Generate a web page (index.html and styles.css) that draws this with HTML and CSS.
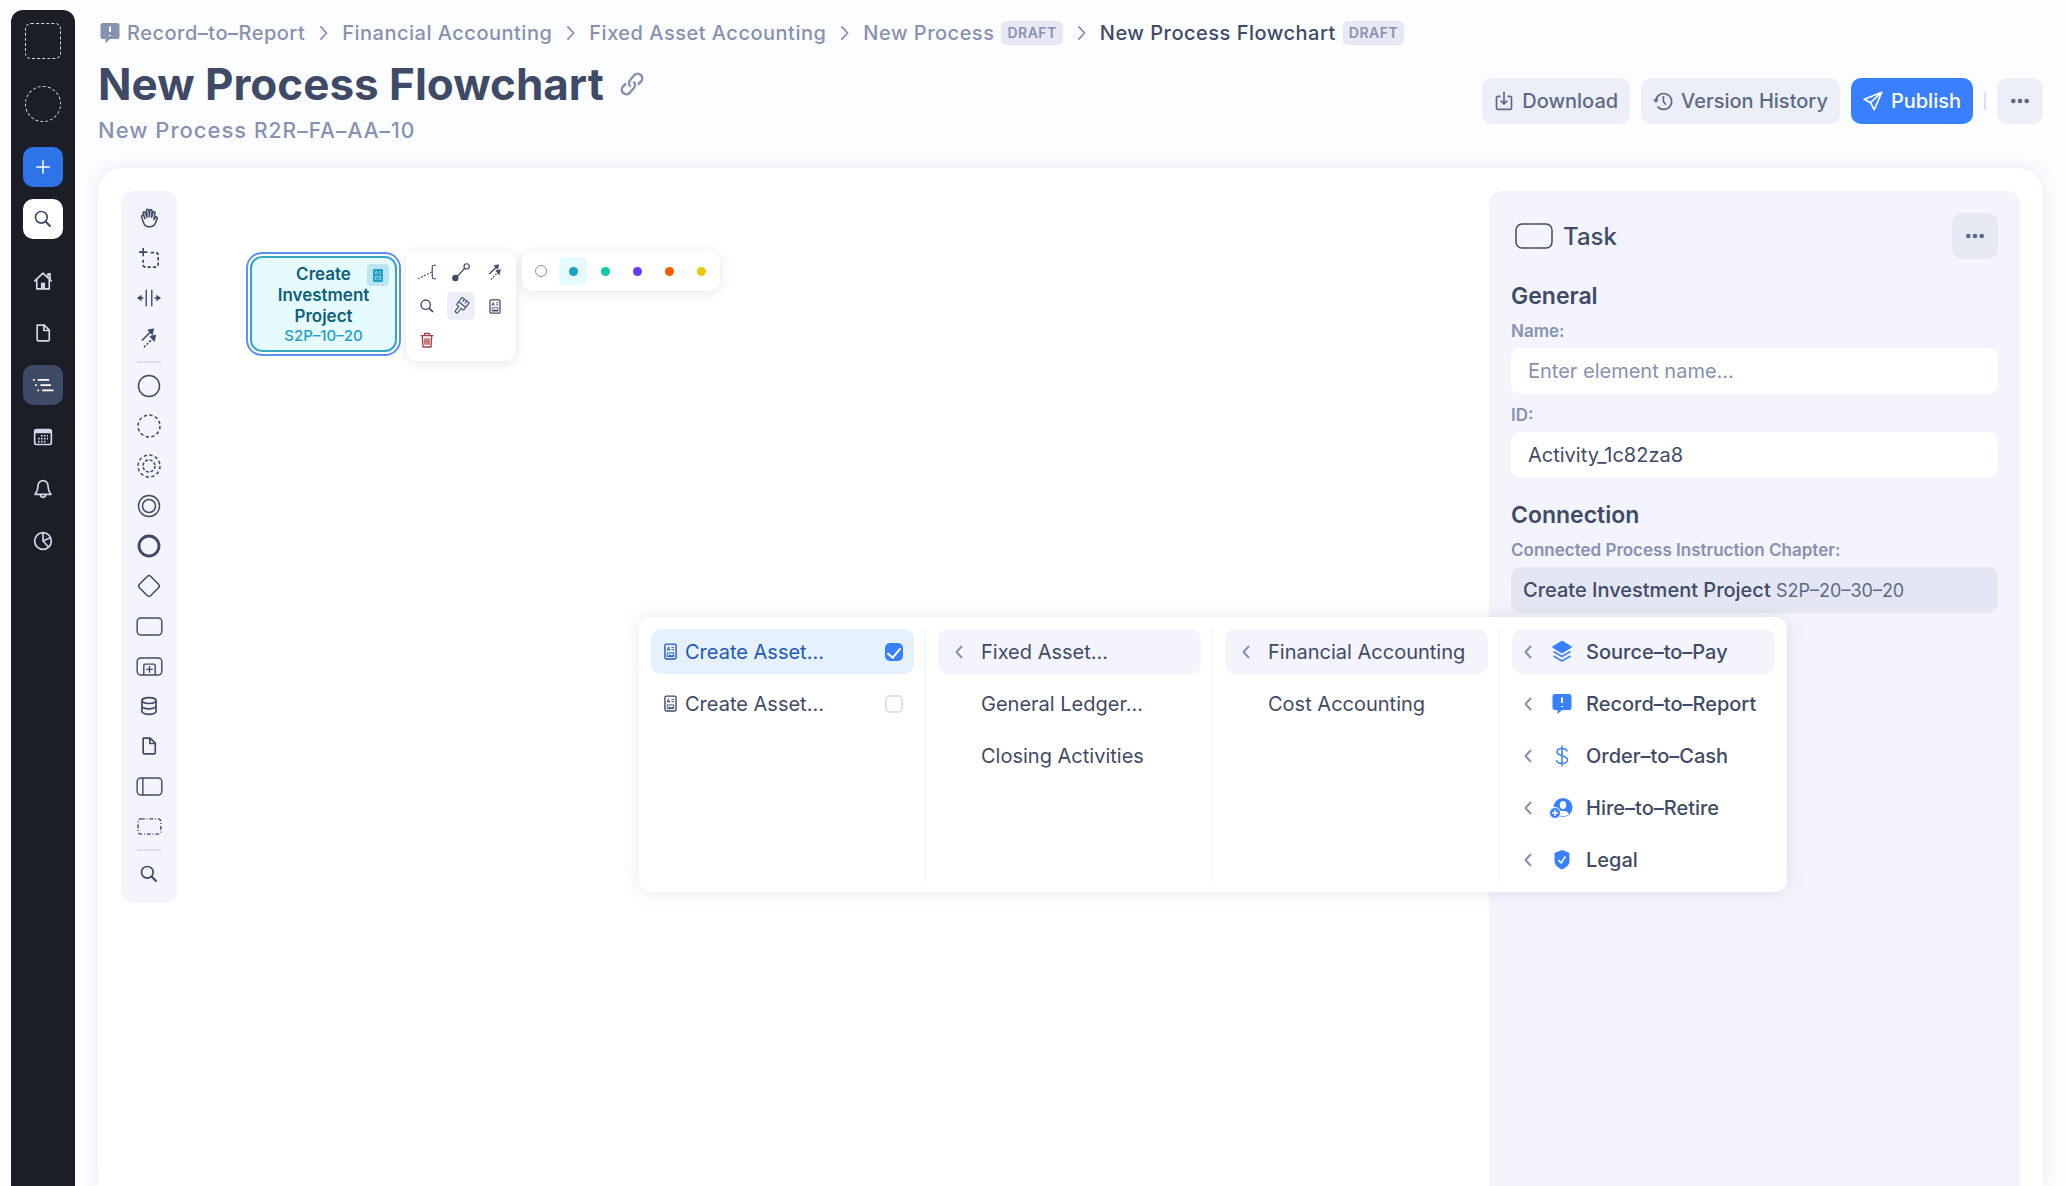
FILE: index.html
```
<!DOCTYPE html>
<html lang="en">
<head>
    <meta charset="UTF-8">
    <meta name="viewport" content="width=device-width, initial-scale=1.0">
    <title>New Process Flowchart</title>
    <link rel="stylesheet" href="styles.css">
</head>
<body>
    <!-- Shared icons -->
    <svg class="sprite" aria-hidden="true">
        <symbol id="i-search" viewBox="0 0 24 24"><circle cx="10" cy="10" r="7"/><path d="M15 15l6 6" stroke-width="2.6"/></symbol>
        <symbol id="i-file" viewBox="0 0 24 24"><path d="M5 2.5h8.5l6 6V20a1.5 1.5 0 0 1-1.500 1.500H6.500A1.500 1.500 0 0 1 5 20zM13 3v6h6"/></symbol>
        <symbol id="i-dots" viewBox="0 0 24 24"><g fill="currentColor" stroke="none"><circle cx="4" cy="12" r="2.800"/><circle cx="12" cy="12" r="2.800"/><circle cx="20" cy="12" r="2.800"/></g></symbol>
        <symbol id="i-right" viewBox="0 0 10 18"><path d="M1.500 1.500l7 7.500-7 7.500"/></symbol>
        <symbol id="i-left" viewBox="0 0 8 14"><path d="M7 1L1.500 7 7 13"/></symbol>
        <symbol id="i-chat" viewBox="0 0 20 22"><path d="M3 1h14a2.500 2.500 0 0 1 2.500 2.500v11A2.500 2.500 0 0 1 17 17H10l-4.500 4V17H3A2.500 2.500 0 0 1 .5 14.500v-11A2.500 2.500 0 0 1 3 1z" fill="currentColor" stroke="none"/><path d="M10 4.500v5.500M10 13v1" stroke="#fff" stroke-width="2"/></symbol>
        <symbol id="i-doc" viewBox="0 0 14 18"><rect x="1" y="1" width="12" height="16" rx="1.500"/><path d="M3.500 8l1.300-4 1.300 4M4 6.800h1.800M8 4.500h3M8 7h3M3.500 10.500h7v4h-7z" stroke-width="1"/><path d="M4 14.500l2.500-2.500 1.500 1.500 1.500-1 1 2z" fill="currentColor" stroke="none"/></symbol>
        <symbol id="i-arrows" viewBox="0 0 24 24"><path d="M3.500 15L14 4.500"/><path d="M6 23L17 12" stroke-dasharray="2.500 2"/><path d="M17.500 1l-1.500 7-5.500-5.500zM20 8.500l-1.500 7.500-5.500-6z" fill="currentColor" stroke-width="1"/></symbol>
        <symbol id="i-task" viewBox="0 0 28 20"><rect x="1" y="1" width="26" height="18" rx="4"/></symbol>
    </svg>

    <nav class="sidebar" aria-label="Main">
        <div class="logo"></div>
        <div class="avatar"></div>
        <button class="side-btn add" aria-label="Create"><svg class="icon" viewBox="0 0 24 24"><path d="M12 3v18M3 12h18"/></svg></button>
        <button class="side-btn find" aria-label="Search"><svg class="icon"><use href="#i-search"/></svg></button>
        <a class="side-btn home" href="#" aria-label="Home"><svg class="icon" viewBox="0 0 24 24"><path d="M1.500 12.500L12 2.500l10.500 10M18 8V3.500h2.500V10M4.500 10.500V21.500h15V10.500"/><path d="M9.500 14h5v7.500h-5z" fill="currentColor" stroke="none"/></svg></a>
        <a class="side-btn" href="#" aria-label="Documents"><svg class="icon"><use href="#i-file"/></svg></a>
        <a class="side-btn active" href="#" aria-label="Processes"><svg class="icon wide" viewBox="0 0 24 16"><path d="M6 2h13M9 8h12M11 14h13M.5 2h2M3 8h2M5.500 14h2"/></svg></a>
        <a class="side-btn" href="#" aria-label="Calendar"><svg class="icon" viewBox="0 0 24 24"><rect x="2" y="3" width="20" height="18" rx="2"/><path d="M2 5.500h20" stroke-width="4"/><path d="M6 17.500h9M6 14h12M9.500 10.500H18" stroke-dasharray="2 1.500"/></svg></a>
        <a class="side-btn" href="#" aria-label="Notifications"><svg class="icon" viewBox="0 0 24 24"><path d="M12 2a6 6 0 0 0-6 6c0 6-2 8-3.500 10.500h19C20 16 18 14 18 8a6 6 0 0 0-6-6zM9 19a3 3 0 0 0 6 0"/></svg></a>
        <a class="side-btn" href="#" aria-label="Reports"><svg class="icon" viewBox="0 0 24 24"><circle cx="12" cy="12" r="10"/><path d="M12 2v10l7 7.500M12 12l9-4"/></svg></a>
    </nav>

    <main>
        <nav class="breadcrumbs" aria-label="Breadcrumb">
            <a href="#"><svg class="icon chat"><use href="#i-chat"/></svg>Record–to–Report</a>
            <svg class="icon sep"><use href="#i-right"/></svg>
            <a href="#">Financial Accounting</a>
            <svg class="icon sep"><use href="#i-right"/></svg>
            <a href="#">Fixed Asset Accounting</a>
            <svg class="icon sep"><use href="#i-right"/></svg>
            <a href="#">New Process <span class="tag">DRAFT</span></a>
            <svg class="icon sep"><use href="#i-right"/></svg>
            <a href="#" class="current" aria-current="page">New Process Flowchart <span class="tag">DRAFT</span></a>
        </nav>

        <header>
            <div class="heading">
                <h1>New Process Flowchart <a href="#" class="permalink" aria-label="Copy link"><svg class="icon" viewBox="0 0 24 24"><path d="M10.500 14.500a5 5 0 0 1 0-7l4-4.500a4.600 4.600 0 0 1 6.500 6.500L18 12.500M13.500 9.500a5 5 0 0 1 0 7l-4 4.500A4.600 4.600 0 0 1 3 14.500L6 11.500"/></svg></a></h1>
                <p>New Process <small>R2R–FA–AA–10</small></p>
            </div>
            <div class="actions">
                <button class="btn"><svg class="icon" viewBox="0 0 24 24"><path d="M8 6.500H5A2 2 0 0 0 3 8.500V20a2 2 0 0 0 2 2h14a2 2 0 0 0 2-2V8.500a2 2 0 0 0-2-2h-3M12 1v14.500M8 11.500l4 4 4-4"/></svg>Download</button>
                <button class="btn"><svg class="icon" viewBox="0 0 24 24"><path d="M3.500 11a9.500 9.500 0 1 1 2 7.500M12.500 6v6.500l3 4"/><path d="M0 10h7l-3.500 4.500z" fill="currentColor" stroke="none"/></svg>Version History</button>
                <button class="btn primary"><svg class="icon" viewBox="0 0 24 24"><path d="M22.500 1.500L1.500 10l7.500 4 4.500 8.500zM22.500 1.500L9 14"/></svg>Publish</button>
                <span class="divider"></span>
                <button class="btn square" aria-label="More"><svg class="icon"><use href="#i-dots"/></svg></button>
            </div>
        </header>

        <section class="workspace">
            <div class="toolbar" role="toolbar" aria-label="Elements">
                <button aria-label="Hand tool"><svg class="icon" viewBox="0 0 24 26"><path d="M7 14.500L4.500 7c-.6-2.200 2-3 2.700-.8L9.500 12 8.800 3.500c0-2.300 2.700-2.400 3 0l.7 8 .7-8c.3-2.200 2.900-2 2.800.3L15.500 12l1.700-6c.6-2 3-1.400 2.600.8L18.500 15l1.500-2.500c1-1.800 3.400-.8 2.600 1.300-1.800 4.700-2.600 10.700-9.600 10.700-7.500 0-8.500-5-10.500-13C2 9.300 4.400 8.600 5 10.500"/></svg></button>
                <button aria-label="Lasso tool"><svg class="icon" viewBox="0 0 24 24"><path d="M5 0v10M0 5h10"/><path d="M14 5.500h6a3 3 0 0 1 3 3V20a3 3 0 0 1-3 3H8a3 3 0 0 1-3-3v-6" stroke-dasharray="4 2.500"/></svg></button>
                <button aria-label="Space tool"><svg class="icon big" viewBox="0 0 26 24"><path d="M10 3v18M16 3v18M1 12h6M25 12h-6"/><path d="M5 8.500v7L0 12zM21 8.500v7l5-3.500z" fill="currentColor" stroke="none"/></svg></button>
                <button aria-label="Connect tool"><svg class="icon"><use href="#i-arrows"/></svg></button>
                <hr>
                <button aria-label="Start event"><svg class="icon big" viewBox="0 0 24 24"><circle cx="12" cy="12" r="10.500"/></svg></button>
                <button aria-label="Non-interrupting event"><svg class="icon big" viewBox="0 0 24 24"><circle cx="12" cy="12" r="11" stroke-dasharray="3.300 2.460"/></svg></button>
                <button aria-label="Boundary event"><svg class="icon big" viewBox="0 0 24 24"><circle cx="12" cy="12" r="11" stroke-dasharray="3.300 2.460"/><circle cx="12" cy="12" r="6" stroke-dasharray="3 1.700"/></svg></button>
                <button aria-label="Intermediate event"><svg class="icon big" viewBox="0 0 24 24"><circle cx="12" cy="12" r="10.500"/><circle cx="12" cy="12" r="6.500"/></svg></button>
                <button aria-label="End event"><svg class="icon big" viewBox="0 0 24 24"><circle cx="12" cy="12" r="10" stroke-width="2.800"/></svg></button>
                <button aria-label="Gateway"><svg class="icon big" viewBox="0 0 24 24"><rect x="4" y="4" width="16" height="16" rx="2.500" transform="rotate(45 12 12)"/></svg></button>
                <button aria-label="Task"><svg class="icon task"><use href="#i-task"/></svg></button>
                <button aria-label="Sub-process"><svg class="icon task" viewBox="0 0 28 20"><rect x="1" y="1" width="26" height="18" rx="4"/><path d="M8 19V9a1.500 1.500 0 0 1 1.500-1.500h9A1.500 1.500 0 0 1 20 9v10M14 9.500v7M10.500 13h7"/></svg></button>
                <button aria-label="Data store"><svg class="icon" viewBox="0 0 24 24"><ellipse cx="12" cy="5.500" rx="8.500" ry="3.500"/><path d="M3.500 5.500v13c0 2 4 3.500 8.500 3.500s8.500-1.500 8.500-3.500v-13M3.500 12c0 2 4 3.500 8.500 3.500s8.500-1.500 8.500-3.500"/></svg></button>
                <button aria-label="Data object"><svg class="icon"><use href="#i-file"/></svg></button>
                <button aria-label="Pool"><svg class="icon task" viewBox="0 0 28 20"><rect x="1" y="1" width="26" height="18" rx="4"/><path d="M7 1v18"/></svg></button>
                <button aria-label="Group"><svg class="icon task" viewBox="0 0 28 20"><rect x="2" y="2" width="24" height="16" rx="3" stroke-dasharray="4 2 1 2"/></svg></button>
                <hr>
                <button aria-label="Search"><svg class="icon"><use href="#i-search"/></svg></button>
            </div>

            <div class="canvas">
                <div class="node">
                    <div class="node-body">
                        <strong>Create Investment Project</strong>
                        <span>S2P–10–20</span>
                    </div>
                    <span class="node-badge"><svg class="icon" viewBox="0 0 14 18"><rect width="14" height="18" rx="2" fill="currentColor" stroke="none"/><path d="M3 7l1.500-4L6 7M8 4h3M8 6.500h3M3 10.500h8v5l-2-2-1.500 1.500-2-2L3 15z"/></svg></span>
                </div>

                <div class="popover context-menu">
                    <button aria-label="Annotation"><svg class="icon" viewBox="0 0 24 24"><path d="M24 3h-3a2 2 0 0 0-2 2v14a2 2 0 0 0 2 2h3"/><path d="M0 21l18-9" stroke-dasharray="2.500 2"/></svg></button>
                    <button aria-label="Connection"><svg class="icon" viewBox="0 0 24 24"><circle cx="19.500" cy="4.500" r="3.500"/><path d="M17 7L6 19"/><circle cx="4.500" cy="20" r="3.500" fill="currentColor"/></svg></button>
                    <button aria-label="Connect"><svg class="icon small"><use href="#i-arrows"/></svg></button>
                    <button aria-label="Change type"><svg class="icon small"><use href="#i-search"/></svg></button>
                    <button class="active" aria-label="Color"><svg class="icon" viewBox="0 0 24 24"><path d="M6 2h12v10.500a2 2 0 0 1-2 2h-2V21a2 2 0 0 1-4 0v-6.500H8a2 2 0 0 1-2-2zM6 9.500h12M10 2v4M14 2v4" transform="rotate(38 12 12)"/></svg></button>
                    <button aria-label="Instruction"><svg class="icon doc"><use href="#i-doc"/></svg></button>
                    <button class="danger" aria-label="Delete"><svg class="icon" viewBox="0 0 24 24"><path d="M2.500 5.500h19M8.500 5.500V2h7v3.500M5 5.500l1 17h12l1-17M9 9.500v9.500M12 9.500v9.500M15 9.500v9.500"/></svg></button>
                </div>

                <div class="popover palette">
                    <button aria-label="Default"><span class="dot none"></span></button>
                    <button class="active" aria-label="Blue"><span class="dot blue"></span></button>
                    <button aria-label="Green"><span class="dot green"></span></button>
                    <button aria-label="Purple"><span class="dot purple"></span></button>
                    <button aria-label="Orange"><span class="dot orange"></span></button>
                    <button aria-label="Yellow"><span class="dot yellow"></span></button>
                </div>
            </div>

            <aside class="panel">
                <div class="panel-head">
                    <svg class="icon" viewBox="0 0 38 26"><rect x="1" y="1" width="36" height="24" rx="6"/></svg>
                    <span>Task</span>
                    <button class="btn square" aria-label="Task options"><svg class="icon"><use href="#i-dots"/></svg></button>
                </div>

                <h2>General</h2>
                <div class="field">
                    <label for="name">Name:</label>
                    <input type="text" id="name" placeholder="Enter element name...">
                </div>
                <div class="field">
                    <label for="elementId">ID:</label>
                    <input type="text" id="elementId" value="Activity_1c82za8">
                </div>

                <h2>Connection</h2>
                <div class="field">
                    <label for="chapter">Connected Process Instruction Chapter:</label>
                    <button id="chapter" class="chapter" aria-expanded="true">Create Investment Project <small>S2P–20–30–20</small></button>

                    <div class="picker">
                        <div class="col">
                            <label class="option selected"><svg class="icon doc"><use href="#i-doc"/></svg>Create Asset...<input type="checkbox" checked></label>
                            <label class="option"><svg class="icon doc"><use href="#i-doc"/></svg>Create Asset...<input type="checkbox"></label>
                        </div>
                        <div class="col">
                            <button class="option open"><svg class="icon chevron"><use href="#i-left"/></svg>Fixed Asset...</button>
                            <button class="option"><span class="chevron"></span>General Ledger...</button>
                            <button class="option"><span class="chevron"></span>Closing Activities</button>
                        </div>
                        <div class="col">
                            <button class="option open"><svg class="icon chevron"><use href="#i-left"/></svg>Financial Accounting</button>
                            <button class="option"><span class="chevron"></span>Cost Accounting</button>
                        </div>
                        <div class="col areas">
                            <button class="option open"><svg class="icon chevron"><use href="#i-left"/></svg><svg class="icon area" viewBox="0 0 20 22"><path d="M10 .5l9 5.500-9 5.500L1 6z" fill="currentColor"/><path d="M1.500 10.500L10 15.500l8.500-5M1.500 15L10 20l8.500-5"/></svg>Source–to–Pay</button>
                            <button class="option"><svg class="icon chevron"><use href="#i-left"/></svg><svg class="icon area"><use href="#i-chat"/></svg>Record–to–Report</button>
                            <button class="option"><svg class="icon chevron"><use href="#i-left"/></svg><svg class="icon area" viewBox="0 0 20 22"><path d="M15 6.500C15 4.500 13 3.500 10 3.500S5 5 5 7c0 4.500 10.500 3 10.500 8 0 2-2.500 3.500-5.500 3.500S4.500 17 4.500 15M10 .5v21"/></svg>Order–to–Cash</button>
                            <button class="option"><svg class="icon chevron"><use href="#i-left"/></svg><svg class="icon area" viewBox="0 0 20 22"><circle cx="11" cy="10.500" r="9.500" fill="currentColor" stroke="none"/><ellipse cx="11" cy="8" rx="3.200" ry="4" fill="#fff" stroke="none"/><path d="M5 17c1.500-4.500 10.500-4.500 12 0-3.500 3-8.500 3-12 0z" fill="#fff" stroke="none"/><circle cx="3" cy="16" r="5.500" fill="currentColor" stroke="#fff" stroke-width="1"/><path d="M3 13v6M0 16h6" stroke="#fff"/></svg>Hire–to–Retire</button>
                            <button class="option"><svg class="icon chevron"><use href="#i-left"/></svg><svg class="icon area" viewBox="0 0 20 22"><path d="M10 1l7.500 3v8c0 4-3.500 6.500-7.500 8.500C6 18.500 2.500 16 2.500 12V4z" fill="currentColor" stroke="none"/><path d="M6.500 11l2.500 3 4.500-6.500" stroke="#fff"/></svg>Legal</button>
                        </div>
                    </div>
                </div>
            </aside>
        </section>
    </main>
</body>
</html>
```

FILE: styles.css
```
* {
    box-sizing: border-box;
}

body {
    font-family: Inter, "Liberation Sans", sans-serif;
    font-size: 20px;
    color: #3f4b66;
    background-color: #fcfdff;
    margin: 0;
    height: 100vh;
    display: flex;
    overflow: hidden;
}

button, input {
    font: inherit;
    color: inherit;
    border: none;
    background: none;
    padding: 0;
    margin: 0;
}

button {
    cursor: pointer;
}

a {
    color: inherit;
    text-decoration: none;
}

h1, h2, p {
    margin: 0;
}

.sprite {
    display: none;
}

.icon {
    width: 20px;
    height: 20px;
    flex: none;
    fill: none;
    stroke: currentColor;
    stroke-width: 2;
    stroke-linejoin: round;
    overflow: visible;
}

/* Sidebar */
.sidebar {
    width: 64px;
    flex: none;
    margin: 10px 0 0 11px;
    padding-top: 13px;
    background-color: #1b1e27;
    border-radius: 12px 12px 0 0;
    display: flex;
    flex-direction: column;
    align-items: center;
    gap: 12px;
    color: #d3d7ea;
}

.logo, .avatar {
    width: 36px;
    height: 36px;
    border: 1px dashed #d3d7ea;
    border-radius: 6px;
    flex: none;
}

.avatar {
    border-radius: 50%;
    margin: 15px 0 13px;
}

.side-btn {
    width: 40px;
    height: 40px;
    flex: none;
    border-radius: 10px;
    display: flex;
    align-items: center;
    justify-content: center;
}

.side-btn .wide {
    width: 22px;
    height: 14px;
}

.side-btn.add {
    background-color: #2f73e8;
    color: white;
}

.side-btn.add .icon {
    width: 18px;
}

.side-btn.find {
    background-color: white;
    color: #3f4b66;
}

.side-btn.home {
    margin-top: 10px;
}

.side-btn.active {
    background-color: #3f4b66;
    color: white;
}

/* Page header */
main {
    flex: 1;
    min-width: 0;
    padding: 20px 23px 0;
    display: flex;
    flex-direction: column;
}

.breadcrumbs {
    display: flex;
    align-items: center;
    gap: 14px;
    height: 26px;
    font-weight: 500;
    letter-spacing: 0.025em;
    color: #8791b0;
}

.breadcrumbs a {
    display: flex;
    align-items: center;
    gap: 7px;
}

.breadcrumbs .chat {
    height: 22px;
    margin-left: 2px;
}

.breadcrumbs .sep {
    width: 9px;
    height: 16px;
}

.breadcrumbs .current {
    color: #3f4b66;
}

.tag {
    background-color: #e6e8f4;
    color: #8791b0;
    border-radius: 5px;
    padding: 0 6px;
    font-size: 14px;
    line-height: 24px;
    font-weight: 600;
}

header {
    display: flex;
    align-items: center;
    justify-content: space-between;
    margin: 11px 0 24px;
}

h1 {
    font-size: 44px;
    line-height: 54px;
    font-weight: 700;
    display: flex;
    align-items: center;
    gap: 16px;
}

.permalink {
    display: flex;
    color: #8791b0;
}

.permalink .icon {
    width: 24px;
    height: 24px;
    stroke-width: 2.5;
}

.heading p {
    margin-top: 6px;
    font-size: 22px;
    line-height: 26px;
    font-weight: 500;
    letter-spacing: 1px;
    color: #8791b0;
}

.heading small {
    font-size: 21px;
}

.actions {
    display: flex;
    align-items: center;
    gap: 11px;
}

.btn {
    height: 46px;
    padding: 0 12px;
    border-radius: 10px;
    background-color: #eceef8;
    color: #5c6a85;
    font-weight: 500;
    display: flex;
    align-items: center;
    gap: 8px;
}

.btn.primary {
    background-color: #3880ff;
    color: white;
}

.btn.square {
    width: 46px;
    justify-content: center;
}

.divider {
    width: 2px;
    height: 18px;
    background-color: #dcdfec;
}

/* Workspace */
.workspace {
    flex: 1;
    min-height: 0;
    background-color: white;
    border-radius: 24px 24px 0 0;
    box-shadow: 0 0 16px rgba(63, 75, 102, 0.12);
    padding: 23px 23px 0;
    display: flex;
    align-items: flex-start;
}

.toolbar {
    width: 56px;
    padding: 7px 0 9px;
    background-color: #f3f4fc;
    border-radius: 12px;
    display: flex;
    flex-direction: column;
    align-items: center;
}

.toolbar button {
    width: 40px;
    height: 40px;
    display: flex;
    align-items: center;
    justify-content: center;
}

.toolbar .big {
    width: 24px;
    height: 24px;
    stroke-width: 1.5;
}

.toolbar .task {
    width: 27px;
    height: 19px;
    stroke-width: 1.5;
}

.toolbar hr {
    width: 24px;
    border: none;
    border-top: 2px solid #d9dfee;
    margin: 3px 0;
}

.canvas {
    flex: 1;
    align-self: stretch;
    position: relative;
}

.node {
    position: absolute;
    left: 69px;
    top: 61px;
    width: 155px;
    padding: 2px;
    border: 2px solid #5b93f5;
    border-radius: 16px;
    text-align: center;
}

.node-body {
    padding: 6px 16px 5px;
    border: 2px solid #37a6c4;
    border-radius: 12px;
    background-color: #e6fbff;
    color: #0d607a;
    font-size: 17px;
    line-height: 21px;
}

.node-body strong {
    display: block;
    font-weight: 600;
}

.node-body span {
    display: block;
    font-size: 15px;
    line-height: 18px;
    font-weight: 500;
    color: #1f9fc6;
}

.node-badge {
    position: absolute;
    top: 10px;
    right: 10px;
    width: 22px;
    height: 22px;
    border-radius: 4px;
    background-color: #b9e6f0;
    color: #1f9fc6;
    display: flex;
    align-items: center;
    justify-content: center;
}

.node-badge .icon {
    width: 10px;
    height: 13px;
}

.node-badge path {
    stroke: #b9e6f0;
    stroke-width: 1;
}

.popover {
    position: absolute;
    background-color: white;
    border-radius: 10px;
    box-shadow: 0 2px 12px rgba(63, 75, 102, 0.14);
}

.popover button {
    width: 28px;
    height: 28px;
    border-radius: 5px;
    display: flex;
    align-items: center;
    justify-content: center;
}

.popover button.active {
    background-color: #eceef8;
}

.context-menu {
    left: 229px;
    top: 60px;
    padding: 7px;
    display: grid;
    grid-template-columns: repeat(3, 28px);
    gap: 6px;
}

.context-menu .icon {
    width: 18px;
    height: 18px;
    stroke-width: 1.5;
}

.context-menu .small {
    width: 16px;
    height: 16px;
    stroke-width: 2;
}

.context-menu .doc {
    width: 12px;
    height: 15px;
}

.context-menu .danger {
    color: #a83a45;
}

.context-menu .danger .icon {
    width: 16px;
    height: 16px;
    stroke-width: 2;
}

.palette {
    left: 345px;
    top: 60px;
    padding: 6px 5px;
    display: flex;
    gap: 4px;
}

.palette button.active {
    background-color: #e6fbff;
}

.dot {
    width: 9px;
    height: 9px;
    border-radius: 50%;
}

.dot.none {
    width: 12px;
    height: 12px;
    border: 1px solid #8791b0;
}

.dot.blue { background-color: #1f9fc6; }
.dot.green { background-color: #0cc9a9; }
.dot.purple { background-color: #6938ff; }
.dot.orange { background-color: #ff5c00; }
.dot.yellow { background-color: #e8c90c; }

/* Properties panel */
.panel {
    width: 531px;
    align-self: stretch;
    padding: 22px;
    background-color: #f3f4fc;
    border-radius: 12px 12px 0 0;
}

.panel-head {
    display: flex;
    align-items: center;
    gap: 10px;
    font-size: 24px;
    font-weight: 500;
    padding-left: 4px;
}

.panel-head > .icon {
    width: 38px;
    height: 26px;
    stroke-width: 1.5;
}

.panel-head .btn {
    margin-left: auto;
    background-color: #e6e8f4;
}

h2 {
    margin: 22px 0 9px;
    font-size: 23px;
    line-height: 30px;
    font-weight: 600;
}

.field {
    position: relative;
    display: flex;
    flex-direction: column;
    gap: 6px;
    margin-bottom: 10px;
}

.field > label {
    font-size: 17px;
    line-height: 22px;
    font-weight: 600;
    color: #8791b0;
}

.field input[type="text"] {
    width: 100%;
    height: 46px;
    padding: 0 17px;
    border-radius: 10px;
    background-color: white;
}

.field input::placeholder {
    color: #8791b0;
}

.chapter {
    height: 46px;
    padding: 0 12px;
    border-radius: 10px;
    background-color: #e4e7f3;
    text-align: left;
    font-weight: 500;
}

.chapter small {
    font-size: 18px;
    font-weight: 400;
    color: #5c6a85;
}

/* Chapter picker */
.picker {
    position: absolute;
    top: calc(100% + 4px);
    right: 211px;
    padding: 12px 0 10px;
    background-color: white;
    border-radius: 12px;
    box-shadow: 0 0 18px rgba(63, 75, 102, 0.13);
    display: grid;
    grid-template-columns: repeat(4, 287px);
}

.col {
    padding: 0 10px 0 12px;
    border-right: 2px solid #f6f7fc;
    display: flex;
    flex-direction: column;
    gap: 7px;
}

.col:last-child {
    border-right-color: transparent;
}

.option {
    height: 45px;
    padding: 0 11px 0 17px;
    border-radius: 10px;
    display: flex;
    align-items: center;
    gap: 18px;
    white-space: nowrap;
}

.option.open {
    background-color: #f3f4fc;
}

label.option {
    padding-left: 13px;
    gap: 8px;
}

.option.selected {
    background-color: #e6f1ff;
    color: #2259b8;
}

.option .doc {
    width: 13px;
    height: 17px;
    stroke-width: 1.5;
}

.option input {
    appearance: none;
    width: 18px;
    height: 18px;
    margin-left: auto;
    border: 2px solid #dcdfec;
    border-radius: 5px;
    background-color: white;
    display: flex;
    justify-content: center;
}

.option input:checked {
    background-color: #3880ff;
    border-color: #3880ff;
}

.option input:checked::after {
    content: "";
    width: 6px;
    height: 11px;
    border: solid white;
    border-width: 0 2px 2px 0;
    transform: rotate(40deg);
}

.chevron {
    width: 8px;
    height: 14px;
    color: #8791b0;
}

.areas .option {
    padding-left: 12px;
    gap: 14px;
    font-weight: 500;
}

.area {
    width: 20px;
    height: 22px;
    margin-left: 6px;
    color: #3880ff;
    stroke-width: 1.5;
}
```
